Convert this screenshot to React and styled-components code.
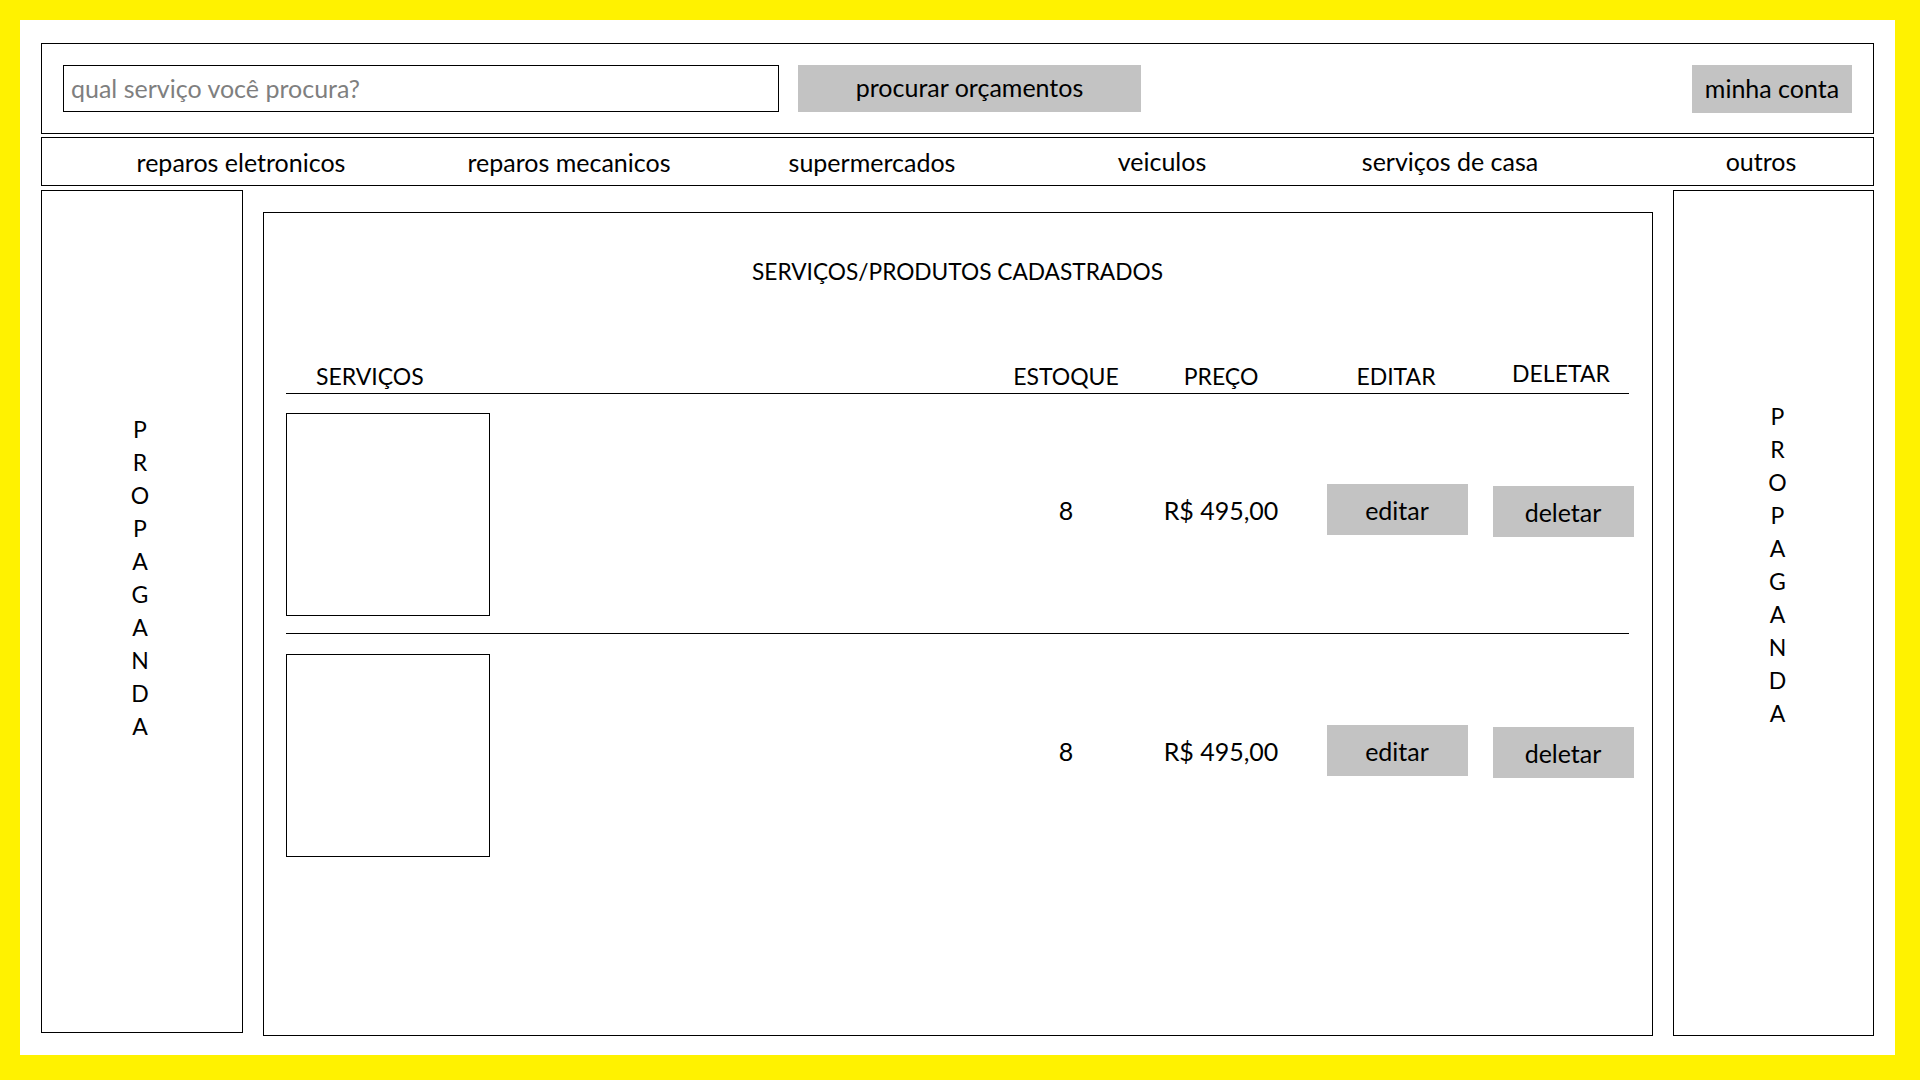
import React from "react";
import styled, { createGlobalStyle } from "styled-components";

const GlobalStyle = createGlobalStyle`
  html, body {
    margin: 0;
    padding: 0;
    background: #fff200;
  }
  body {
    padding: 20px 25px 25px 20px;
    font-family: Lato, "Open Sans", "Liberation Sans", sans-serif;
    color: #000;
  }
  * { box-sizing: border-box; }
`;

const Frame = styled.div`
  background: #fff;
  height: 1035px;
  padding: 23px 21px 19px 21px;
  display: flex;
  flex-direction: column;
`;

const TopBar = styled.header`
  border: 1px solid #000;
  height: 91px;
  display: flex;
  align-items: center;
  padding: 0 21px;
`;

const SearchBox = styled.div`
  width: 716px;
  height: 47px;
  border: 1px solid #000;
  display: flex;
  align-items: center;
  padding: 0 0 2px 7px;
  font-size: 25px;
  color: #7f7f7f;
`;

const GreyButton = styled.button`
  border: none;
  background: #c3c3c3;
  font-family: inherit;
  font-size: 25px;
  color: #000;
  padding: 0 0 ${(p) => p.$pb || 0}px;
  width: ${(p) => p.$w}px;
  height: ${(p) => p.$h}px;
  flex: none;
  margin-left: ${(p) => (p.$ml === "auto" ? "auto" : `${p.$ml || 0}px`)};
  margin-bottom: ${(p) => p.$lift || 0}px;
  justify-self: center;
  cursor: pointer;
`;

const Nav = styled.nav`
  margin-top: 3px;
  border: 1px solid #000;
  height: 49px;
  display: flex;
  align-items: center;
`;

const NavLink = styled.span`
  flex: none;
  width: 220px;
  display: flex;
  justify-content: center;
  white-space: nowrap;
  font-size: 25px;
  margin-left: ${(p) => p.$ml}px;
  margin-top: ${(p) => p.$dy || 0}px;
`;

const Columns = styled.div`
  flex: 1;
  margin-top: 4px;
  display: flex;
  align-items: stretch;
  min-height: 0;
`;

const Sidebar = styled.aside`
  width: ${(p) => p.$w}px;
  flex: none;
  border: 1px solid #000;
  margin-left: ${(p) => p.$ml || 0}px;
  margin-bottom: ${(p) => p.$mb || 0}px;
  padding-top: ${(p) => p.$top}px;
  display: flex;
  flex-direction: column;
  align-items: center;
`;

const Letter = styled.span`
  font-size: 23px;
  line-height: 33px;
  height: 33px;
  transform: translateX(${(p) => p.$dx || 0}px);
`;

const MainPanel = styled.main`
  width: 1390px;
  flex: none;
  min-width: 0;
  margin: 22px 0 0 20px;
  border: 1px solid #000;
  padding: 44px 23px 0 22px;
  display: flex;
  flex-direction: column;
`;

const Title = styled.h1`
  margin: 0;
  font-weight: 400;
  font-size: 22.7px;
  line-height: 30px;
  text-align: center;
`;

const Grid = styled.div`
  display: grid;
  grid-template-columns: 710px 140px 170px 180px 150px;
  align-items: center;
`;

const HeaderRow = styled(Grid)`
  margin-top: 74px;
  padding-bottom: 2px;
  border-bottom: 1px solid #000;
`;

const HeadLabel = styled.span`
  font-size: 23px;
  line-height: 30px;
  white-space: nowrap;
  text-align: ${(p) => (p.$left ? "left" : "center")};
  padding-left: ${(p) => (p.$left ? 30 : 0)}px;
  transform: translateY(${(p) => p.$dy || 0}px);
`;

const ItemRow = styled(Grid)`
  padding: ${(p) => p.$pt}px 0 17px;
  border-bottom: ${(p) => (p.$divider ? "1px solid #000" : "none")};
`;

const Thumb = styled.div`
  width: 204px;
  height: 203px;
  border: 1px solid #000;
`;

const Cell = styled.span`
  font-size: 25px;
  text-align: center;
  white-space: nowrap;
  margin-bottom: 10px;
`;

const letters = "PROPAGANDA".split("");

const navItems = [
  { label: "reparos eletronicos", ml: 89, dy: 1 },
  { label: "reparos mecanicos", ml: 108, dy: 1 },
  { label: "supermercados", ml: 83, dy: 1 },
  { label: "veiculos", ml: 70, dy: -1 },
  { label: "serviços de casa", ml: 68, dy: -1 },
  { label: "outros", ml: 91, dy: -1 },
];

const items = [
  { id: 1, stock: 8, price: "R$ 495,00" },
  { id: 2, stock: 8, price: "R$ 495,00" },
];

export default function App() {
  return (
    <>
      <GlobalStyle />
      <Frame>
        <TopBar>
          <SearchBox>qual serviço você procura?</SearchBox>
          <GreyButton $w={343} $h={47} $ml={19} $pb={4}>
            procurar orçamentos
          </GreyButton>
          <GreyButton $w={160} $h={48} $ml="auto" $pb={2}>
            minha conta
          </GreyButton>
        </TopBar>
        <Nav>
          {navItems.map((n) => (
            <NavLink key={n.label} $ml={n.ml} $dy={n.dy}>
              {n.label}
            </NavLink>
          ))}
        </Nav>
        <Columns>
          <Sidebar $w={202} $top={222} $mb={3}>
            {letters.map((l, i) => (
              <Letter key={i} $dx={-2}>
                {l}
              </Letter>
            ))}
          </Sidebar>
          <MainPanel>
            <Title>SERVIÇOS/PRODUTOS CADASTRADOS</Title>
            <HeaderRow>
              <HeadLabel $left>SERVIÇOS</HeadLabel>
              <HeadLabel>ESTOQUE</HeadLabel>
              <HeadLabel>PREÇO</HeadLabel>
              <HeadLabel>EDITAR</HeadLabel>
              <HeadLabel $dy={-3}>DELETAR</HeadLabel>
            </HeaderRow>
            {items.map((it, idx) => (
              <ItemRow key={it.id} $divider={idx < items.length - 1} $pt={idx === 0 ? 19 : 20}>
                <Thumb />
                <Cell>{it.stock}</Cell>
                <Cell>{it.price}</Cell>
                <GreyButton $w={141} $h={51} $lift={10} $ml={2}>
                  editar
                </GreyButton>
                <GreyButton $w={141} $h={51} $lift={6} $ml={4}>
                  deletar
                </GreyButton>
              </ItemRow>
            ))}
          </MainPanel>
          <Sidebar $w={201} $ml={20} $top={209}>
            {letters.map((l, i) => (
              <Letter key={i} $dx={4}>
                {l}
              </Letter>
            ))}
          </Sidebar>
        </Columns>
      </Frame>
    </>
  );
}
